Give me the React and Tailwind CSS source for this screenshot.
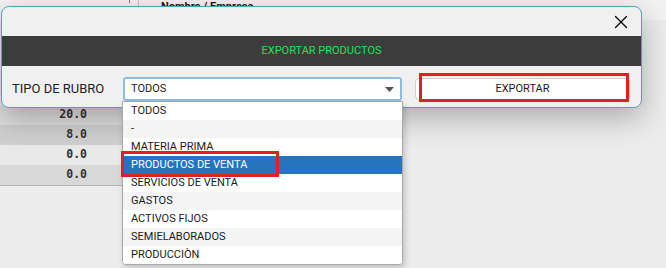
import React from 'react';
import { X } from 'lucide-react';

const rows = [
  { value: '20.0', bg: 'bg-[#dedede]' },
  { value: '8.0', bg: 'bg-[#cfcfcf]' },
  { value: '0.0', bg: 'bg-[#e9e9e9]' },
  { value: '0.0', bg: 'bg-[#d8d8d8]' },
];

const options = [
  'TODOS',
  '-',
  'MATERIA PRIMA',
  'PRODUCTOS DE VENTA',
  'SERVICIOS DE VENTA',
  'GASTOS',
  'ACTIVOS FIJOS',
  'SEMIELABORADOS',
  'PRODUCCIÒN',
];

const selected = 'PRODUCTOS DE VENTA';

const App = () => {
  return (
    <div className="relative w-[666px] h-[268px] overflow-hidden bg-[#ececec] font-['Roboto',sans-serif] text-[#1a1a1a]">
      {/* table behind the dialog */}
      <div className="flex h-[20px] items-start bg-[#f2f2f2]">
        <div className="w-[130px] h-[3px] border-r border-[#777]"></div>
        <div className="w-[9px] h-[8px] border-r border-[#c4c4c4]"></div>
        <div className="pl-[22px] pt-[1px] text-[11px] font-bold leading-none">Nombre / Empresa</div>
      </div>
      <div className="mt-[85px] w-[140px] border-b border-[#b4b4b4]">
        {rows.map((row, i) => (
          <div key={i} className={`flex h-[20px] items-center ${row.bg}`}>
            <div className="w-[87px] text-right font-['DejaVu_Sans_Mono',monospace] text-[11.5px] font-bold text-[#333]">
              {row.value}
            </div>
          </div>
        ))}
      </div>

      {/* dialog */}
      <div className="absolute left-[1px] top-[6px] w-[641px] h-[102px] rounded-[8px] border border-[#4ea2b8] bg-[#f0f0f0] shadow-[0_10px_30px_rgba(0,0,0,0.28)] overflow-hidden">
        <div className="flex h-[29px] items-center justify-end pr-[9px]">
          <X size={22} strokeWidth={1.3} className="text-black" />
        </div>
        <div className="flex h-[30px] items-center justify-center bg-[#3c3c3c] text-[11px] text-[#22e05a]">
          EXPORTAR PRODUCTOS
        </div>
        <div className="flex h-[41px] items-start pt-[11px] pl-[10px]">
          <div className="w-[111px] h-[24px] flex items-center text-[13px] text-[#222]">TIPO DE RUBRO</div>
          <div className="relative flex w-[279px] h-[24px] items-center rounded-[3px] border-2 border-[#8fbbe6] bg-white pl-[6px] text-[11px]">
            TODOS
            <svg className="absolute right-[6px] top-[8px]" width="9" height="5" viewBox="0 0 9 5">
              <path d="M0 0 H9 L4.5 5 Z" fill="#555" />
            </svg>
          </div>
          <button className="ml-[13px] mt-[1px] flex w-[215px] h-[22px] items-center justify-center rounded-[4px] border border-[#cfcfcf] bg-white text-[11px] text-[#1a1a1a]">
            EXPORTAR
          </button>
        </div>
      </div>

      {/* open select list */}
      <div className="absolute left-[122px] top-[101px] w-[281px] rounded-b-[4px] border border-[#a8a8a8] bg-white shadow-[2px_3px_6px_rgba(0,0,0,0.18)] overflow-hidden">
        {options.map((opt, i) => (
          <div
            key={opt}
            className={`flex h-[18px] items-center pl-[8px] pt-[1px] text-[11px] ${
              opt === selected ? 'bg-[#2673bf] text-white' : i % 2 === 1 ? 'bg-[#f4f4f4]' : 'bg-white'
            }`}
          >
            {opt}
          </div>
        ))}
      </div>

      {/* red annotation boxes */}
      <div className="absolute left-[121px] top-[151px] w-[158px] h-[26px] border-[3px] border-[#e3201f]"></div>
      <div className="absolute left-[419px] top-[73px] w-[210px] h-[29px] border-[3px] border-[#e3201f]"></div>
    </div>
  );
};

export default App;
